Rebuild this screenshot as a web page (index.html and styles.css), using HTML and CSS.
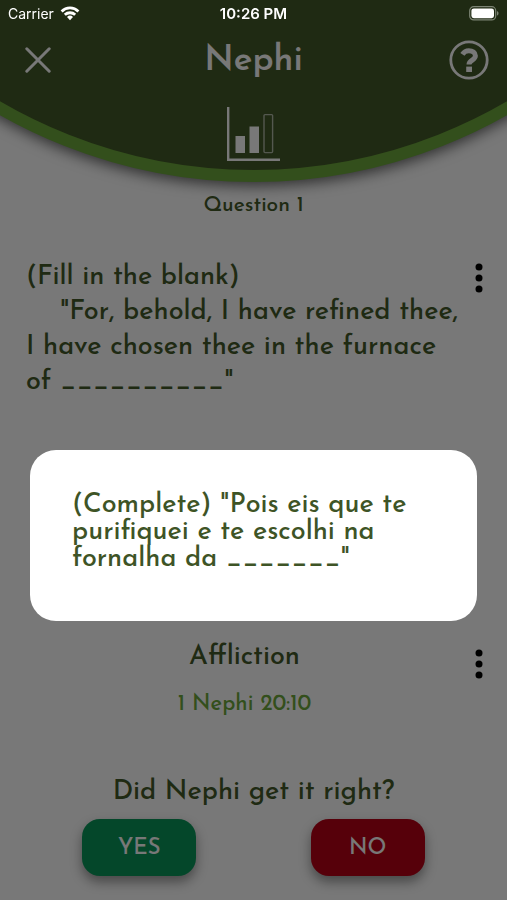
FILE: index.html
```html
<!DOCTYPE html>
<html lang="en">
<head>
    <meta charset="UTF-8">
    <meta name="viewport" content="width=device-width, initial-scale=1.0">
    <title>Nephi</title>
    <link rel="stylesheet" href="styles.css">
</head>
<body>

    <div class="status-bar">
        <div class="carrier">
            <span>Carrier</span>
            <svg width="20" height="16" viewBox="0 0 20 16" fill="none" stroke="#fff" stroke-width="2.8">
                <path d="M1.6 5.4a12 12 0 0 1 16.8 0"/>
                <path d="M4.8 8.8a7.6 7.6 0 0 1 10.4 0"/>
                <path d="M10 14.2l-3-3.2a4.4 4.4 0 0 1 6 0z" fill="#fff" stroke="none"/>
            </svg>
        </div>
        <span class="time">10:26 PM</span>
        <svg class="battery" width="30" height="15" viewBox="0 0 30 15">
            <rect x="0.7" y="0.7" width="26" height="13.2" rx="4" fill="none" stroke="#7c8474" stroke-width="1.2"/>
            <rect x="2.4" y="2.4" width="22.6" height="9.8" rx="2.4" fill="#fff"/>
            <path d="M28 5v4.6c2-.8 2-3.8 0-4.6z" fill="#7c8474"/>
        </svg>
    </div>

    <div class="page">
        <header class="header">
            <div class="nav">
                <button type="button" class="icon-button close" aria-label="Close">
                    <svg width="26" height="26" viewBox="0 0 26 26" stroke="currentColor" stroke-width="3" stroke-linecap="round">
                        <path d="M1.8 1.8l22.4 22.4M24.2 1.8L1.8 24.2"/>
                    </svg>
                </button>
                <h1>Nephi</h1>
                <button type="button" class="icon-button help" aria-label="Help">
                    <svg width="40" height="40" viewBox="0 0 40 40" fill="none" stroke="currentColor">
                        <circle cx="20" cy="20" r="18.2" stroke-width="2.8"/>
                        <path d="M13.4 14.4c1.6-2.4 3.6-3.6 6.4-3.6 3.8 0 6.6 1.8 6.6 5 0 4.4-6.4 4.2-6.4 8.8" stroke-width="5"/>
                        <path d="M17.2 26.6h5.8v5.4h-5.8z" fill="currentColor" stroke="none"/>
                    </svg>
                </button>
            </div>
            <svg class="chart" width="54" height="54" viewBox="0 0 54 54" fill="currentColor">
                <path d="M0 0h2.4v51.4H53V54H0z"/>
                <rect x="8.5" y="29" width="9.5" height="17"/>
                <rect x="22.5" y="19.5" width="9.5" height="26.5"/>
                <rect x="37" y="7.6" width="8.6" height="38" rx="1" fill="none" stroke="currentColor" stroke-opacity="0.6" stroke-width="1.4"/>
            </svg>
        </header>

        <main>
            <h2 class="question-number">Question 1</h2>

            <div class="row question">
                <p class="question-text">(Fill in the blank)<br><span class="indent">"For, behold, I have refined thee,</span><br>I have chosen thee in the furnace<br>of __________"</p>
                <button type="button" class="more-button" aria-label="Question options">
                    <svg width="8" height="30" viewBox="0 0 8 30">
                        <circle cx="4" cy="4" r="3.5"/>
                        <circle cx="4" cy="15" r="3.5"/>
                        <circle cx="4" cy="26" r="3.5"/>
                    </svg>
                </button>
            </div>

            <div class="row answer">
                <div class="answer-body">
                    <p class="answer-text">Affliction</p>
                    <a href="#" class="reference">1 Nephi 20:10</a>
                </div>
                <button type="button" class="more-button" aria-label="Answer options">
                    <svg width="8" height="30" viewBox="0 0 8 30">
                        <circle cx="4" cy="4" r="3.5"/>
                        <circle cx="4" cy="15" r="3.5"/>
                        <circle cx="4" cy="26" r="3.5"/>
                    </svg>
                </button>
            </div>

            <p class="prompt">Did Nephi get it right?</p>
            <div class="buttons">
                <button type="button" class="button yes">YES</button>
                <button type="button" class="button no">NO</button>
            </div>
        </main>
    </div>

    <div class="overlay">
        <div class="modal" role="dialog" aria-modal="true" lang="pt-BR">
            <p>(Complete) "Pois eis que te purifiquei e te escolhi na fornalha da _______"</p>
        </div>
    </div>

</body>
</html>
```
FILE: styles.css
```css
* {
    box-sizing: border-box;
}

body {
    margin: 0;
    background-color: #f0f0f0;
    color: #3e5426;
    font-family: "Josefin Sans", Lato, sans-serif;
    font-weight: 500;
}

h1,
h2,
p {
    margin: 0;
    font-weight: 500;
}

button {
    padding: 0;
    border: none;
    background: none;
    color: inherit;
    font: inherit;
    cursor: pointer;
}

svg {
    display: block;
}

/* stays above the overlay */
.status-bar {
    position: fixed;
    top: 0;
    left: 0;
    right: 0;
    z-index: 3;
    display: grid;
    grid-template-columns: 1fr auto 1fr;
    align-items: center;
    height: 27px;
    padding: 0 8px;
    color: #fff;
    font-family: Inter, sans-serif;
    font-size: 14px;
    font-weight: 400;
}

.carrier {
    display: flex;
    align-items: center;
    gap: 6px;
}

.time {
    font-size: 15px;
    font-weight: 600;
}

.battery {
    justify-self: end;
}

.page {
    min-height: 100vh;
    overflow: hidden;
}

.header {
    position: relative;
    height: 182px;
    padding-top: 36px;
    color: #f0f0f0;
}

/* the curved green background */
.header::before {
    content: "";
    position: absolute;
    z-index: -1;
    bottom: 0;
    left: 50%;
    width: 198vw;
    height: 198vw;
    transform: translateX(-50%);
    border: 12px solid #669e38;
    border-radius: 50%;
    background-color: #3e5426;
    box-shadow: 0 4px 14px rgba(0, 0, 0, 0.6);
}

.nav {
    display: grid;
    grid-template-columns: 1fr auto 1fr;
    align-items: center;
    height: 48px;
    padding: 0 18px;
}

.nav h1 {
    padding-top: 4px;
    font-size: 35px;
    font-weight: 600;
    line-height: 44px;
}

.close {
    justify-self: start;
    margin-left: 7px;
}

.help {
    justify-self: end;
}

.chart {
    margin: 23px auto 0;
}

.question-number {
    padding-top: 12px;
    font-size: 21px;
    line-height: 24px;
    text-align: center;
}

.row {
    display: flex;
    align-items: flex-start;
    padding: 0 24px 0 26px;
}

.question {
    margin-top: 42px;
    min-height: 380px;
}

.question-text {
    flex: 1;
    font-size: 27px;
    line-height: 35px;
    white-space: nowrap;
}

.indent {
    padding-left: 34px;
}

.more-button {
    flex: none;
    padding-top: 3px;
}

.answer .more-button {
    padding-top: 9px;
}

.answer-body {
    flex: 1;
    padding-right: 12px;
    text-align: center;
}

.answer-text {
    font-size: 27px;
    line-height: 36px;
}

.reference {
    display: block;
    margin-top: 15px;
    color: #669e38;
    font-size: 22px;
    line-height: 28px;
    text-decoration: none;
}

.prompt {
    margin-top: 56px;
    font-size: 27px;
    line-height: 36px;
    text-align: center;
}

.buttons {
    display: flex;
    justify-content: space-around;
    margin-top: 8px;
    padding: 0 25px;
}

.button {
    width: 114px;
    height: 57px;
    padding-top: 2px;
    border-radius: 18px;
    color: #f0f0f0;
    font-size: 22px;
    box-shadow: 0 6px 12px rgba(0, 0, 0, 0.4);
}

.yes {
    background-color: #088e54;
}

.no {
    background-color: #ac0014;
}

.overlay {
    position: fixed;
    inset: 0;
    z-index: 2;
    display: flex;
    align-items: center;
    padding: 171px 30px 0;
    background-color: rgba(0, 0, 0, 0.5);
}

.modal {
    width: 100%;
    padding: 42px 42px 48px;
    border-radius: 26px;
    background-color: #fff;
}

.modal p {
    font-size: 27px;
    line-height: 27px;
}
```
